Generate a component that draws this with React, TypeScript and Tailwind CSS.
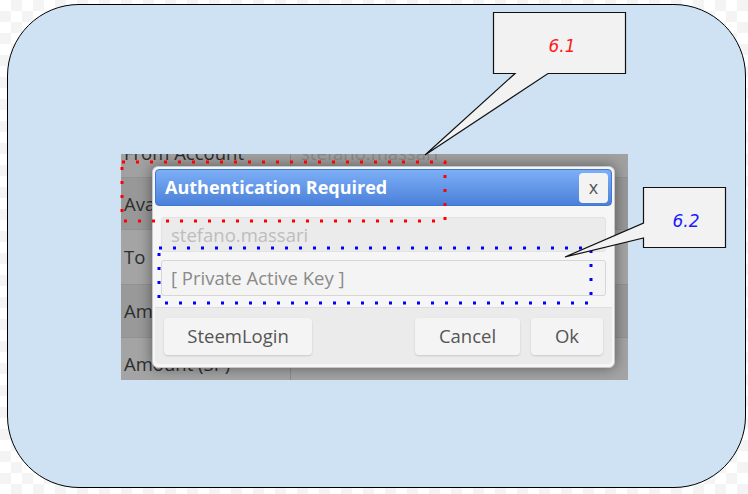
import React from "react";

const rows = [
  { label: "From Account", value: "stefano.massari", h: "h-[50px] -mt-[26px]", bg: "bg-[#a1a1a1]" },
  { label: "Available", value: "", h: "h-[52px]", bg: "bg-[#989898]" },
  { label: "To", value: "", h: "h-[55px]", bg: "bg-[#a4a4a4]" },
  { label: "Amount", value: "", h: "h-[53px]", bg: "bg-[#999999]" },
  { label: "Amount (SP)", value: "", h: "h-[53px]", bg: "bg-[#a4a4a4]" },
];

function Btn({ children, className = "" }: { children: React.ReactNode; className?: string }) {
  return (
    <button
      className={`h-[37px] rounded-[4px] bg-[#f4f4f4] text-[18.5px] text-[#555] shadow-[0_1px_2px_rgba(0,0,0,0.15)] ${className}`}
    >
      {children}
    </button>
  );
}

function AuthModal() {
  return (
    <div className="absolute left-[31px] top-[12px] flex h-[202px] w-[463px] flex-col rounded-[6px] border border-[#c8c8c8] bg-[#f6f6f6] p-[2px] shadow-[0_0_14px_rgba(0,0,0,0.45)]">
      <div className="flex h-[37px] items-center justify-between rounded-[4px] border border-[#3f77d2] bg-gradient-to-b from-[#7dafF7] to-[#4a80d9] pl-[9px] pr-[3px]">
        <span className="text-[18px] font-bold text-white">Authentication Required</span>
        <span className="flex h-[30px] w-[29px] items-center justify-center rounded-[4px] bg-[#f3f3f3] text-[18px] text-[#555]">
          x
        </span>
      </div>
      <div className="mt-[11px] flex flex-col gap-[8px] px-[6px]">
        <div className="flex h-[35px] items-center rounded-[3px] border border-[#e2e2e2] bg-[#ebebeb] pl-[9px] text-[18.5px] text-[#bdbdbd]">
          stefano.massari
        </div>
        <div className="flex h-[36px] items-center rounded-[3px] border border-[#d6d6d6] bg-[#f4f4f4] pl-[9px] text-[18.5px] text-[#8a8a8a]">
          [ Private Active Key ]
        </div>
      </div>
      <div className="mt-[11px] flex h-[57px] items-center justify-between rounded-b-[4px] border-t border-[#dedede] bg-[#ebebeb] px-[9px]">
        <Btn className="w-[148px]">SteemLogin</Btn>
        <div className="flex gap-[11px]">
          <Btn className="w-[105px]">Cancel</Btn>
          <Btn className="w-[72px]">Ok</Btn>
        </div>
      </div>
    </div>
  );
}

export default function App() {
  return (
    <div
      className="relative h-[494px] w-[748px] overflow-hidden bg-[repeating-conic-gradient(#f4f4f4_0_25%,#ffffff_0_50%)] bg-[length:22px_22px] pl-[7px] pt-[4px]"
      style={{ fontFamily: '"Open Sans", "Liberation Sans", sans-serif' }}
    >
      <div className="h-[484px] w-[739px] rounded-[72px] border border-black bg-[#cfe2f3] pl-[113px] pt-[149px]">
        <div className="relative h-[226px] w-[507px] overflow-hidden bg-[#a0a0a0]">
          <div className="flex flex-col">
            {rows.map((r) => (
              <div key={r.label} className={`flex shrink-0 border-b border-[#929292] ${r.h} ${r.bg}`}>
                <div className="flex w-[170px] items-center border-r border-[#8c8c8c] pl-[3px] text-[18.5px] text-[#2e2e2e]">
                  {r.label}
                </div>
                <div className="flex flex-1 items-center pl-[10px] text-[18.5px] text-[#8a8a8a]">{r.value}</div>
              </div>
            ))}
          </div>
          <AuthModal />
        </div>
      </div>

      <svg className="pointer-events-none absolute left-0 top-0" width="748" height="494">
        <rect x="122" y="162" width="323" height="59" fill="none" stroke="#ff0000" strokeWidth="3" strokeDasharray="3 11" />
        <rect x="159" y="248" width="432" height="55" fill="none" stroke="#0000ff" strokeWidth="3" strokeDasharray="3 11" />
        <path
          d="M493.5 12.5 H625.5 V73.5 H548 L425 155 L515 73.5 H493.5 Z"
          fill="#f2f2f2"
          stroke="#111"
          strokeWidth="1.2"
        />
        <path
          d="M643.5 187.5 H725.5 V247.5 H643.5 V238 L565 257 L643.5 223 Z"
          fill="#f2f2f2"
          stroke="#111"
          strokeWidth="1.2"
        />
        <text x="562" y="52" textAnchor="middle" fill="#ff1a1a" fontSize="17" fontStyle="italic" fontFamily="DejaVu Sans, sans-serif">
          6.1
        </text>
        <text x="686" y="227" textAnchor="middle" fill="#1a1aff" fontSize="17" fontStyle="italic" fontFamily="DejaVu Sans, sans-serif">
          6.2
        </text>
      </svg>
    </div>
  );
}
